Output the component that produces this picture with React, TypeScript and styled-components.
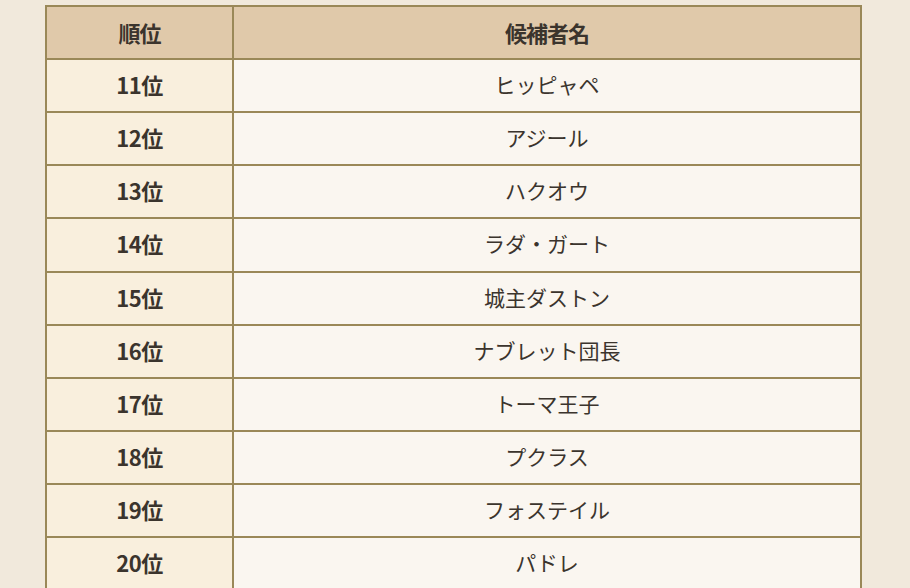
import React from "react";
import styled, { createGlobalStyle } from "styled-components";

const GlobalStyle = createGlobalStyle`
  html, body {
    margin: 0;
    padding: 0;
    background: #f1e9dc;
  }
  body {
    font-family: "Noto Sans CJK JP", "Noto Sans", sans-serif;
    color: #3b342d;
  }
`;

const Page = styled.div`
  padding: 5px 48px 0 45px;
`;

const RankTable = styled.table`
  width: 100%;
  border-collapse: collapse;
  border: 2px solid #9a8858;
  font-size: 21px;
`;

const HeadCell = styled.th`
  height: 49px;
  padding: 0 0 2px;
  border: 2px solid #9a8858;
  background: #e0c9aa;
  font-weight: 700;
  font-size: 22px;
  text-align: center;
  letter-spacing: -1px;
`;

const RankCell = styled.td`
  width: 185px;
  height: 48.15px;
  padding: 0 0 3px;
  border: 2px solid #9a8858;
  background: #f9efdd;
  font-weight: 700;
  font-size: 22px;
  text-align: center;
  letter-spacing: -0.5px;
`;

const NameCell = styled.td`
  height: 48.15px;
  padding: 0 0 3px;
  border: 2px solid #9a8858;
  background: #faf6f0;
  font-weight: 400;
  text-align: center;
`;

const candidates = [
  "ヒッピャペ",
  "アジール",
  "ハクオウ",
  "ラダ・ガート",
  "城主ダストン",
  "ナブレット団長",
  "トーマ王子",
  "プクラス",
  "フォステイル",
  "パドレ",
];

const App: React.FC = () => {
  return (
    <>
      <GlobalStyle />
      <Page>
        <RankTable>
          <thead>
            <tr>
              <HeadCell>順位</HeadCell>
              <HeadCell>候補者名</HeadCell>
            </tr>
          </thead>
          <tbody>
            {candidates.map((name, i) => (
              <tr key={name}>
                <RankCell>{i + 11}位</RankCell>
                <NameCell>{name}</NameCell>
              </tr>
            ))}
          </tbody>
        </RankTable>
      </Page>
    </>
  );
};

export default App;
